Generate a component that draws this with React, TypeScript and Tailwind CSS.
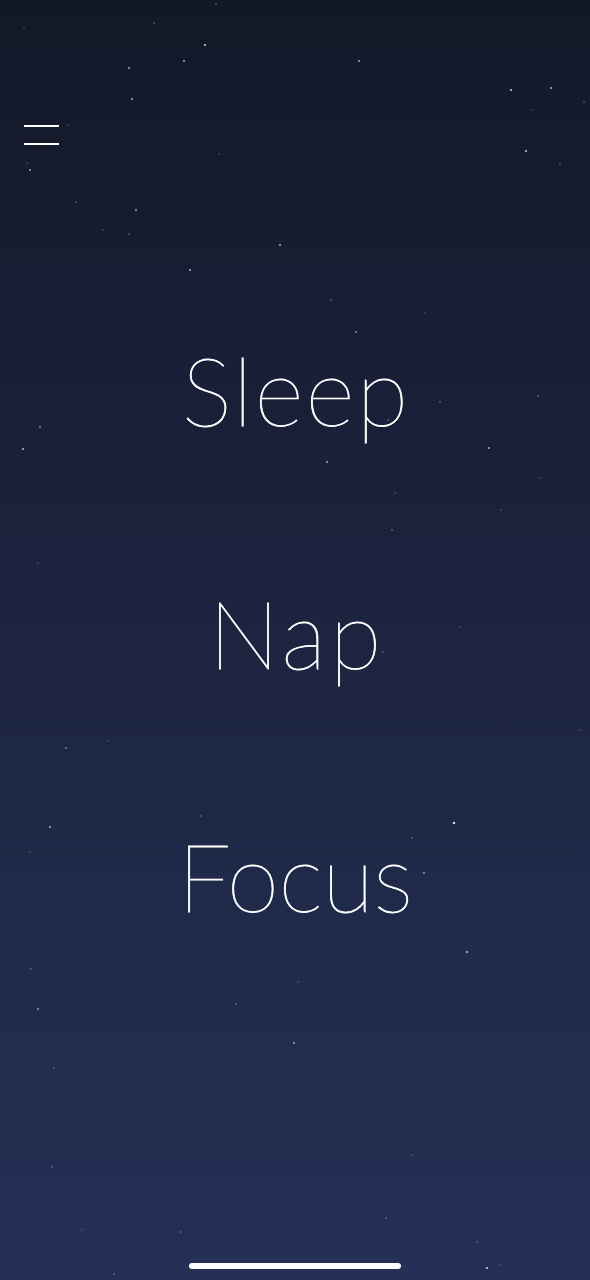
import React from "react";

const stars: [number, number, number, number][] = [
  // x, y, r, opacity
  [205, 45, 1.1, 0.85], [184, 61, 1, 0.75], [129, 68, 1, 0.7], [132, 99, 1, 0.75],
  [359, 61, 1, 0.7], [511, 90, 1.1, 0.85], [551, 88, 1, 0.75], [526, 151, 1.1, 0.8],
  [560, 164, 0.8, 0.45], [30, 170, 1, 0.7], [136, 210, 1, 0.7], [280, 245, 1, 0.7],
  [190, 270, 1, 0.75], [76, 202, 0.8, 0.45], [129, 234, 0.8, 0.5], [216, 4, 0.8, 0.5],
  [584, 102, 0.8, 0.45], [154, 23, 0.8, 0.45], [24, 28, 0.7, 0.35], [68, 125, 0.7, 0.4],
  [27, 163, 0.7, 0.4], [103, 230, 0.7, 0.35], [219, 154, 0.7, 0.35], [532, 110, 0.7, 0.35],
  [23, 449, 1.1, 0.75], [40, 427, 0.9, 0.6], [327, 462, 1, 0.7], [489, 448, 1, 0.7],
  [440, 402, 0.8, 0.5], [538, 396, 0.8, 0.5], [356, 332, 1, 0.6], [388, 420, 0.8, 0.5],
  [392, 530, 0.8, 0.5], [395, 493, 0.7, 0.4], [501, 510, 0.7, 0.4], [38, 563, 0.7, 0.4],
  [331, 300, 0.8, 0.5], [425, 313, 0.7, 0.35], [540, 478, 0.7, 0.35],
  [454, 823, 1.3, 0.9], [50, 827, 1, 0.7], [66, 748, 0.9, 0.55], [424, 873, 1, 0.6],
  [412, 838, 0.8, 0.5], [201, 816, 0.8, 0.45], [383, 652, 0.8, 0.45], [460, 627, 0.7, 0.4],
  [580, 730, 0.7, 0.35], [30, 852, 0.7, 0.4], [108, 741, 0.7, 0.35],
  [467, 952, 1.1, 0.8], [31, 969, 0.8, 0.5], [38, 1009, 1, 0.6], [236, 1004, 0.8, 0.5],
  [294, 1043, 1, 0.65], [298, 982, 0.7, 0.4], [54, 1068, 0.8, 0.45], [52, 1167, 0.8, 0.45],
  [412, 1155, 0.7, 0.35], [487, 1268, 1.1, 0.85], [114, 1274, 0.8, 0.5], [386, 1218, 0.8, 0.45],
  [181, 1232, 0.8, 0.45], [477, 1242, 0.8, 0.45], [82, 1230, 0.7, 0.35], [500, 1265, 0.7, 0.35],
];

export default function App() {
  return (
    <div
      className="relative w-full h-[1280px] overflow-hidden text-white bg-[linear-gradient(180deg,#131828_0%,#1a2039_35%,#1e2745_60%,#243055_100%)]"
      style={{ fontFamily: "Lato, 'Noto Sans', sans-serif" }}
    >
      <svg
        className="absolute inset-0 pointer-events-none"
        width="590"
        height="1280"
        viewBox="0 0 590 1280"
      >
        {stars.map(([x, y, r, o], i) => (
          <circle key={i} cx={x} cy={y} r={r} fill="#dfe6ff" opacity={o} />
        ))}
      </svg>

      <div className="relative flex flex-col h-full">
        <div className="pt-[125px] pl-[24px]">
          <button className="flex flex-col gap-[16px] w-[35px]" aria-label="Menu">
            <span className="block h-[2px] w-[35px] bg-white" />
            <span className="block h-[2px] w-[35px] bg-white" />
          </button>
        </div>

        <main className="mt-[197px] flex flex-col items-center gap-[148px] [-webkit-text-stroke:0.8px_white]">
          <div className="h-[95px] text-[95px] leading-[95px] font-thin tracking-[2px] pl-[2px]">Sleep</div>
          <div className="h-[95px] text-[95px] leading-[95px] font-thin tracking-[3.5px] pl-[3.5px]">Nap</div>
          <div className="h-[95px] text-[95px] leading-[95px] font-thin tracking-[-0.5px]">Focus</div>
        </main>

        <div className="mt-auto pb-[11px] flex justify-center">
          <div className="h-[6px] w-[212px] rounded-full bg-white" />
        </div>
      </div>
    </div>
  );
}
